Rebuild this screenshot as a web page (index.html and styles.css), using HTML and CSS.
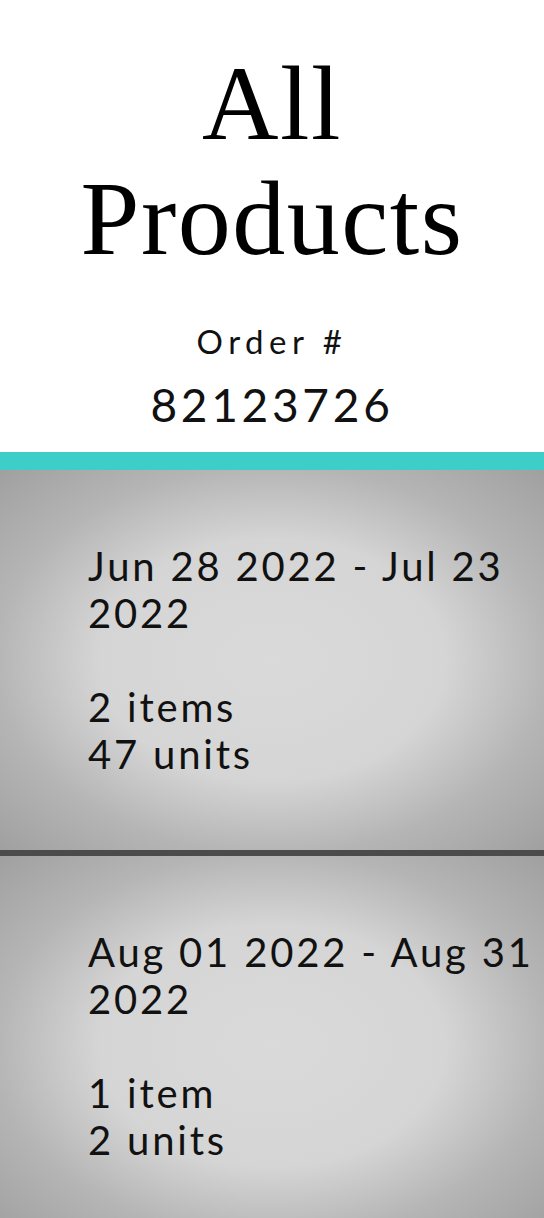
FILE: index.html
```html
<!DOCTYPE html>
<html lang="en">

<head>
    <meta charset="UTF-8">
    <meta name="viewport" content="width=device-width, initial-scale=1.0">
    <title>All Products</title>
    <link rel="stylesheet" href="styles.css">
</head>

<body>

    <header class="header">
        <h1>All Products</h1>
        <p class="order-label">Order #</p>
        <p class="order-number">82123726</p>
    </header>

    <div class="accent"></div>

    <!-- Shipments -->
    <section class="periods">
        <div class="period">
            <p class="dates">Jun 28 2022 - Jul 23 2022</p>
            <p class="counts">2 items<br>47 units</p>
        </div>
        <div class="period">
            <p class="dates">Aug 01 2022 - Aug 31 2022</p>
            <p class="counts">1 item<br>2 units</p>
        </div>
    </section>

</body>

</html>
```

FILE: styles.css
```css
body {
    margin: 0;
    background: white;
    font-family: "Lato", "Noto Sans", sans-serif;
    color: #111;
}

.header {
    text-align: center;
    padding-bottom: 20px;
}

h1 {
    margin: 46px 0 0;
    font-family: "Liberation Serif", "DejaVu Serif", serif;
    font-size: 106px;
    font-weight: normal;
    line-height: 115px;
    letter-spacing: 1.5px;
    color: black;
}

.order-label {
    margin: 46px 0 0;
    font-size: 33px;
    line-height: 38px;
    letter-spacing: 5.5px;
}

.order-number {
    margin: 17px 0 0;
    font-size: 46px;
    line-height: 55px;
    letter-spacing: 3.7px;
}

.accent {
    height: 18px;
    background-color: rgb(62, 206, 202);
}

.period {
    height: 380px;
    box-sizing: border-box;
    padding: 73px 0 72px 88px;
    background: radial-gradient(ellipse at center, #dadada 0%, #d5d5d5 45%, #b5b5b5 72%, #a0a0a0 100%);
}

.period + .period {
    height: 386px;
    border-top: 6px solid #4b4b4b;
}

.period p {
    margin: 0;
    font-size: 40px;
    line-height: 47px;
    letter-spacing: 2.8px;
}

.counts {
    margin-top: 47px !important;
}
```
